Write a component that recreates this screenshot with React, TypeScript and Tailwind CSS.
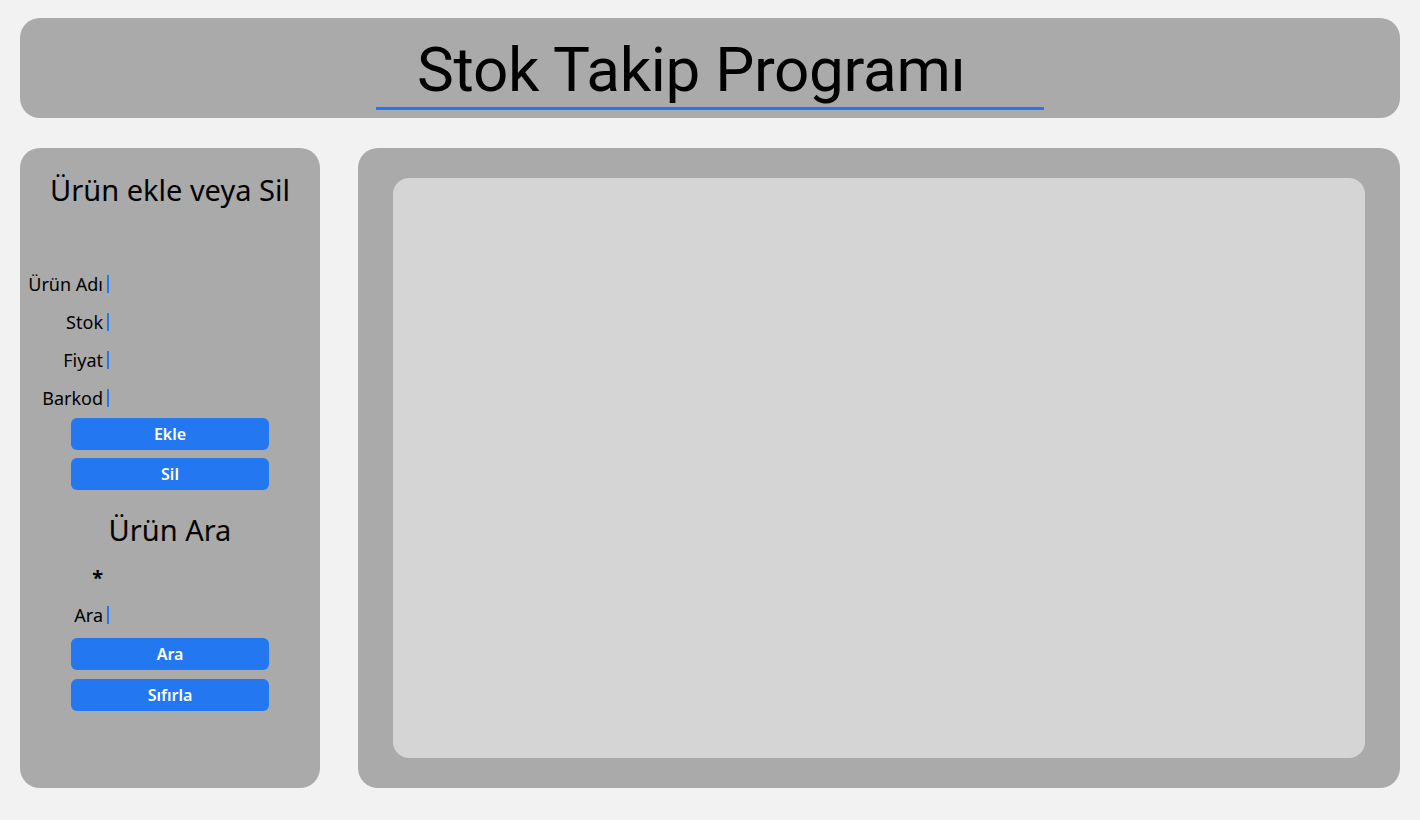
import React from "react";

const fieldLabels = ["Ürün Adı", "Stok", "Fiyat", "Barkod"];

function Field({ label }: { label: string }) {
  return (
    <div className="flex h-[38px] w-full items-center">
      <span className="w-[83px] text-right text-[18px] text-black">{label}</span>
      {/* empty input, only the caret shows */}
      <span className="ml-[4px] h-[18px] w-[2px] bg-[#2378f2]" />
    </div>
  );
}

function Button({ children }: { children: React.ReactNode }) {
  return (
    <button
      type="button"
      className="h-[32px] w-[198px] rounded-md bg-[#2378f2] text-[16px] font-semibold text-white"
    >
      {children}
    </button>
  );
}

export default function App() {
  return (
    <div className="flex min-h-[820px] w-full flex-col gap-[30px] bg-[#f2f2f2] px-[20px] pt-[18px] font-['Noto_Sans',sans-serif]">
      {/* Header */}
      <header className="flex h-[100px] flex-col items-center rounded-[20px] bg-[#aaaaaa]">
        <div className="flex w-[668px] flex-col">
          <h1 className="pl-[41px] pt-[15px] font-['Roboto',sans-serif] text-[62px] leading-[74px] tracking-[-0.3px] text-black">
            Stok Takip Programı
          </h1>
          <div className="h-[3px] w-full bg-[#2378f2]" />
        </div>
      </header>

      <div className="flex h-[640px] gap-[38px]">
        {/* Left panel */}
        <aside className="flex w-[300px] shrink-0 flex-col items-center rounded-[20px] bg-[#aaaaaa] pt-[22px]">
          <h2 className="text-[29px] leading-[40px] text-black">Ürün ekle veya Sil</h2>
          <div className="mt-[55px] flex w-full flex-col">
            {fieldLabels.map((l) => (
              <Field key={l} label={l} />
            ))}
          </div>
          <div className="mt-[1px] flex flex-col gap-[8px]">
            <Button>Ekle</Button>
            <Button>Sil</Button>
          </div>
          <h2 className="mt-[20px] text-[29px] leading-[40px] text-black">Ürün Ara</h2>
          <div className="mt-[10px] flex h-[36px] w-full items-center">
            <span className="w-[83px] text-right text-[20px] font-bold leading-none text-black">*</span>
          </div>
          <Field label="Ara" />
          <div className="mt-[4px] flex flex-col gap-[9px]">
            <Button>Ara</Button>
            <Button>Sıfırla</Button>
          </div>
        </aside>

        {/* Right panel */}
        <main className="flex flex-1 rounded-[20px] bg-[#aaaaaa] px-[35px] py-[30px]">
          <div className="flex-1 rounded-[16px] bg-[#d5d5d5]" />
        </main>
      </div>
    </div>
  );
}
